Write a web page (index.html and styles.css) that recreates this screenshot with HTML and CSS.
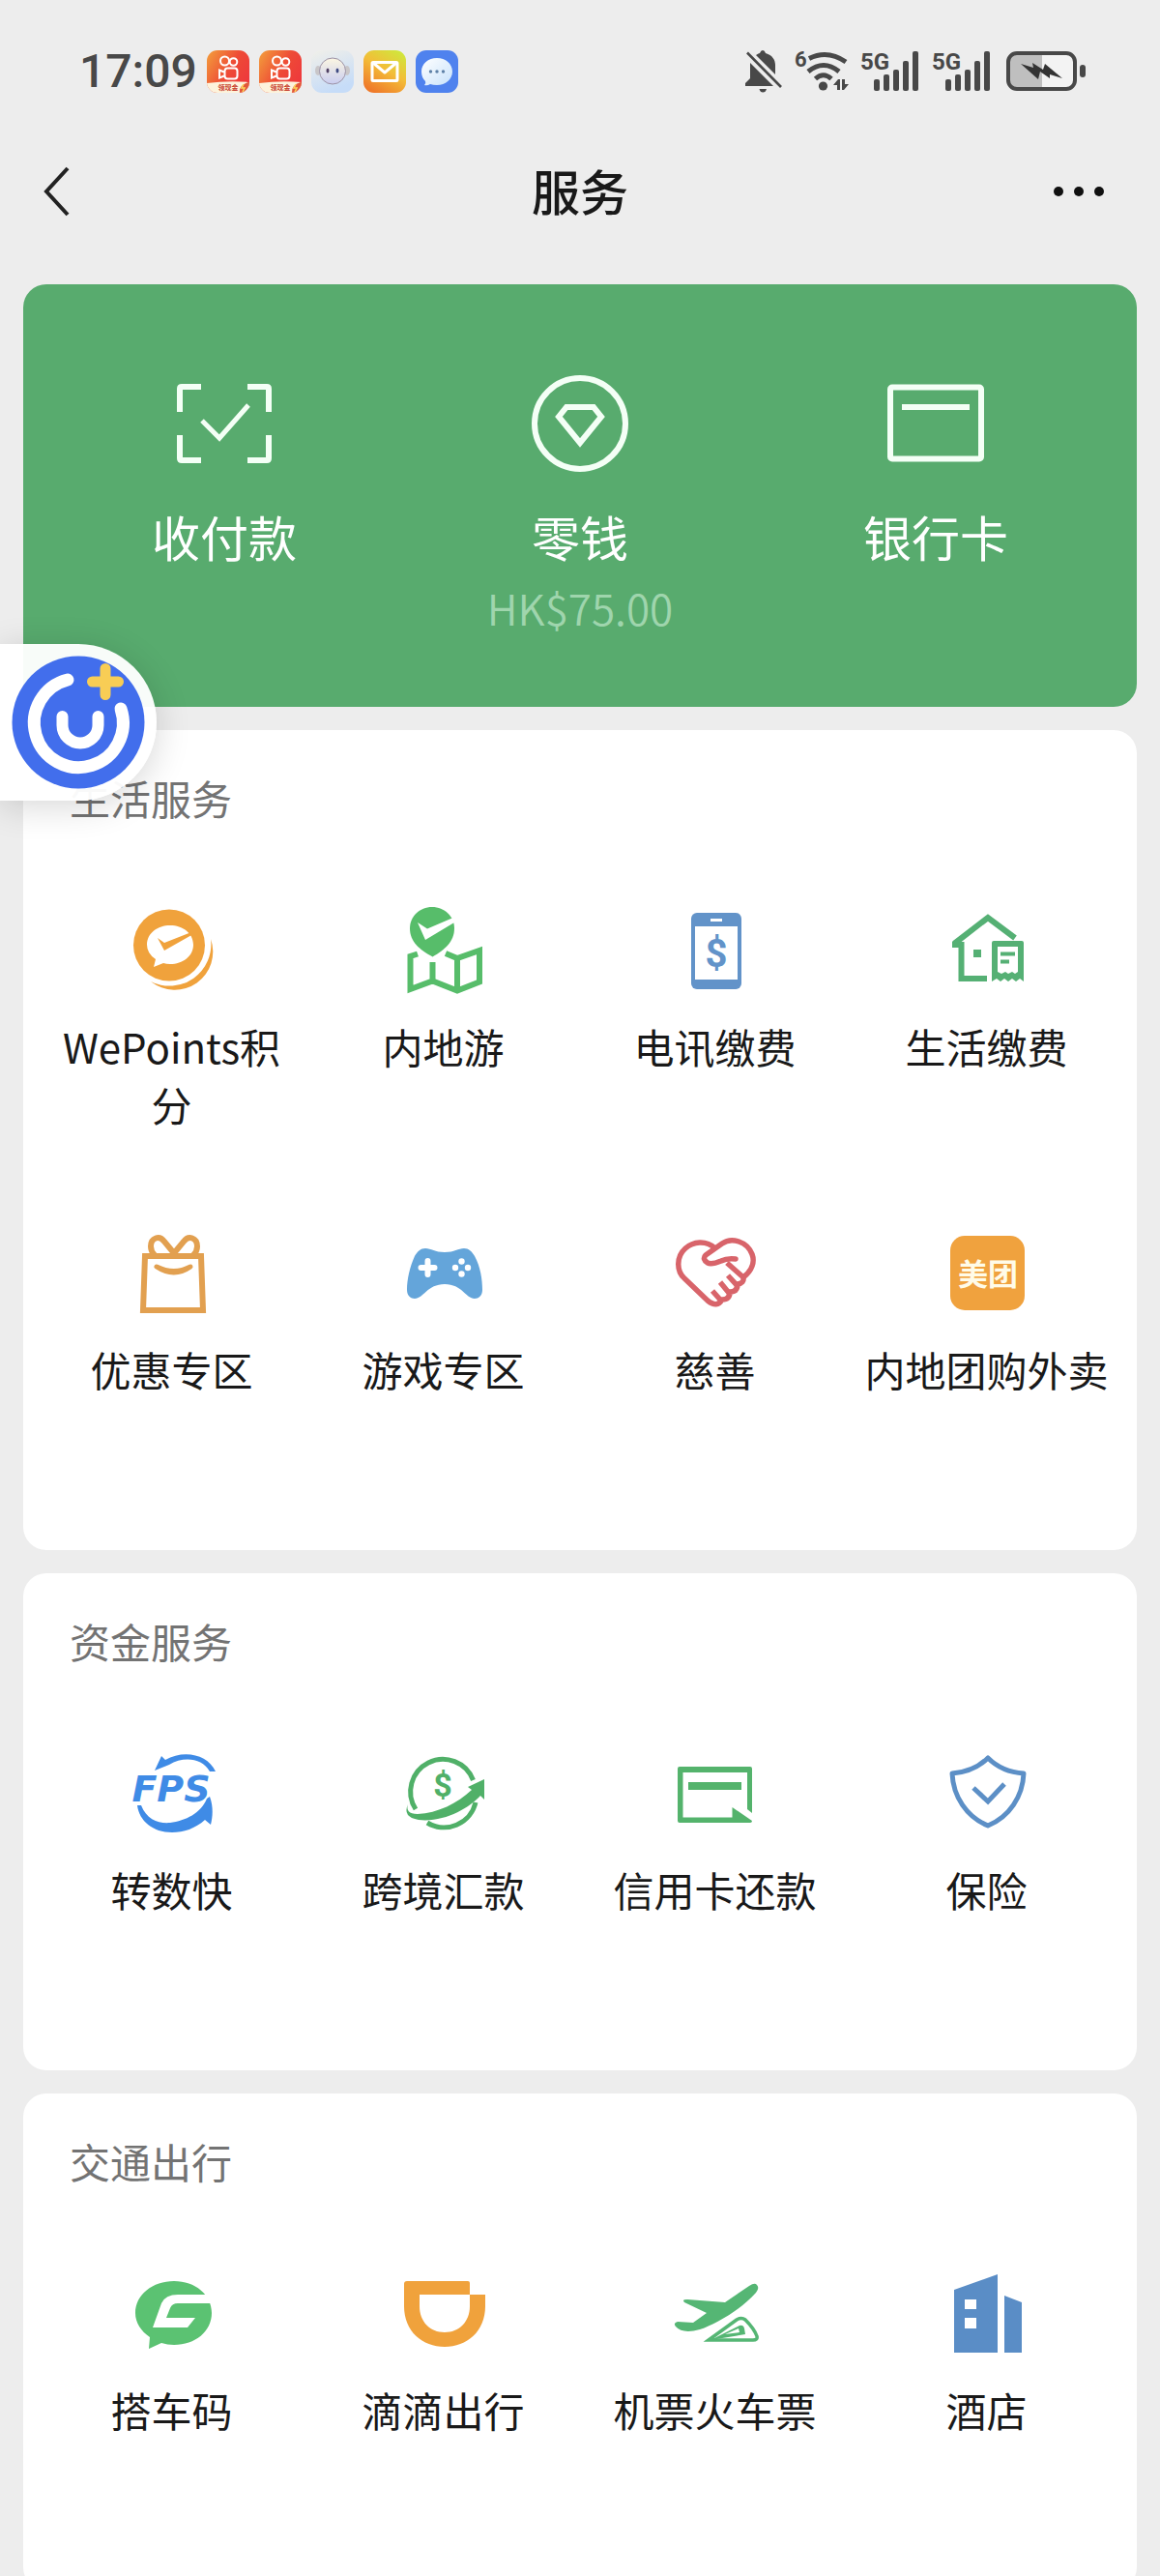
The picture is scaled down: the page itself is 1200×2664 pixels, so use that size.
FILE: index.html
```html
<!DOCTYPE html>
<html lang="zh-CN">
<head>
  <meta charset="UTF-8">
  <meta name="viewport" content="width=device-width">
  <title>服务</title>
  <link rel="stylesheet" href="styles.css">
</head>
<body>
  <div class="statusbar">
    <span class="time">17:09</span>
    <div class="apps">
      <svg viewBox="0 0 44 44" width="44" height="44">
        <defs>
          <linearGradient id="ks" x1="0" y1="0" x2="1" y2="0.6"><stop offset="0" stop-color="#f3a03c"/><stop offset="0.6" stop-color="#ee4a36"/><stop offset="1" stop-color="#ee3a3c"/></linearGradient>
          <clipPath id="app"><rect width="44" height="44" rx="11"/></clipPath>
        </defs>
        <g id="kuaishou" clip-path="url(#app)">
          <rect width="44" height="44" fill="url(#ks)"/>
          <g fill="none" stroke="#fff" stroke-width="2">
            <circle cx="18.500" cy="11" r="4.500"/><circle cx="27.500" cy="12" r="3.800"/>
            <rect x="18.500" y="18.500" width="13" height="11" rx="3"/>
            <path d="M18 22.500l-5-2v8l5-2"/>
          </g>
          <path d="M0 34q22-3 44-1v11H0z" fill="#fdf3dc"/>
          <path d="M34 44q-1-8 9-11h1v11z" fill="#e2573a"/>
          <path d="M38 35l-2 4h3l-2 4" fill="none" stroke="#fbd65a" stroke-width="1.500"/>
          <text x="22" y="41" font-size="7" class="tiny" fill="#c8402c">领现金</text>
        </g>
      </svg>
      <svg viewBox="0 0 44 44" width="44" height="44"><use href="#kuaishou"/></svg>
      <svg viewBox="0 0 44 44" width="44" height="44">
        <defs>
          <linearGradient id="bot" x1="0" y1="0" x2="0.4" y2="1"><stop offset="0" stop-color="#f1f0e9"/><stop offset="1" stop-color="#c6dcf8"/></linearGradient>
          <linearGradient id="face" x1="0" y1="0" x2="0" y2="1"><stop offset="0" stop-color="#fcf6e2"/><stop offset="1" stop-color="#c9cdf0"/></linearGradient>
        </defs>
        <rect width="44" height="44" rx="11" fill="url(#bot)"/>
        <ellipse cx="7" cy="21" rx="3" ry="5" fill="#c9c6c8"/><ellipse cx="37" cy="21" rx="3" ry="5" fill="#c9c6c8"/>
        <circle cx="22" cy="21.500" r="13.500" fill="url(#face)" stroke="#9d93a6" stroke-width="1"/>
        <ellipse cx="17" cy="21" rx="1.500" ry="2.500" fill="#4f3f63"/><ellipse cx="27" cy="21" rx="1.500" ry="2.500" fill="#3f4a83"/>
      </svg>
      <svg viewBox="0 0 44 44" width="44" height="44">
        <defs><linearGradient id="mail" x1="0.900" y1="0" x2="0.300" y2="1"><stop offset="0" stop-color="#cdea3c"/><stop offset="0.500" stop-color="#f3bd38"/><stop offset="1" stop-color="#ef7a2a"/></linearGradient></defs>
        <rect width="44" height="44" rx="11" fill="url(#mail)"/>
        <g fill="none" stroke="#fff" stroke-width="3" stroke-linejoin="round"><rect x="9" y="12.500" width="26" height="19" rx="1"/><path d="M10 13l12 10 12-10"/></g>
      </svg>
      <svg viewBox="0 0 44 44" width="44" height="44">
        <defs><linearGradient id="msg" x1="0" y1="0" x2="1" y2="1"><stop offset="0" stop-color="#fff"/><stop offset="1" stop-color="#c8e2fb"/></linearGradient></defs>
        <rect width="44" height="44" rx="11" fill="#4f82ee"/>
        <path d="M22 8c9 0 16 6 16 14s-7 14-16 14q-4 0-7-1-3 2-6 1 2-2 1-4-4-4-4-10C6 14 13 8 22 8z" fill="url(#msg)"/>
        <g fill="#5f82a8"><circle cx="15.500" cy="22" r="1.700"/><circle cx="22" cy="22" r="1.700"/><circle cx="28.500" cy="22" r="1.700"/></g>
      </svg>
    </div>
    <div class="signals">
      <svg viewBox="0 0 39 44" width="39" height="44" fill="#484848">
        <path d="M5 13L29 37H0V34L5 29z"/>
        <path d="M11 5q3-2 4-2 1-3 3-3t3 3c7 2 10 7 10 12v10z"/>
        <path d="M14.500 40H22q-1 3.500-3.800 3.500T14.500 40z"/>
        <path d="M2 2.500L37 38" stroke="#484848" stroke-width="2.600"/>
      </svg>
      <svg viewBox="0 0 56 44" width="56" height="44" fill="#484848">
        <text x="0" y="17" font-size="22" class="net">6</text>
        <g fill="none" stroke="#484848" stroke-width="5">
          <path d="M15 8.500Q34-1 53 12"/><path d="M14 22Q30 9 46 22"/><path d="M21.500 29.500Q30 22 38 29.500"/>
        </g>
        <circle cx="29.500" cy="37" r="4.600"/>
        <path d="M40 36l5-6h2v11h-3v-5zM56 35l-5 6h-2V30h3v5z"/>
      </svg>
      <svg viewBox="0 0 62 44" width="62" height="44">
        <g id="bars" fill="#484848">
          <text x="0" y="20" font-size="24" class="net">5G</text>
          <rect x="14" y="30" width="6" height="12" rx="2"/><rect x="24" y="25" width="6" height="17" rx="2"/><rect x="34" y="20" width="6" height="22" rx="2"/><rect x="44" y="11" width="6" height="31" rx="2"/><rect x="54" y="1" width="6" height="41" rx="2"/>
        </g>
      </svg>
      <svg viewBox="0 0 62 44" width="62" height="44"><use href="#bars"/></svg>
      <svg viewBox="0 0 85 44" width="85" height="44">
        <path d="M14 3h26v36H14Q6 39 6 31V11q0-8 8-8z" fill="#bfbfbf"/>
        <path d="M40 3h25q8 0 8 8v20q0 8-8 8H40z" fill="#f3f3f3"/>
        <rect x="5" y="3" width="69" height="37" rx="9" fill="none" stroke="#484848" stroke-width="4"/>
        <rect x="79" y="15" width="6" height="13" rx="3" fill="#484848"/>
        <path d="M18 14l13 4-1-5 11 7 2-6 18 15-13-4v4l-10-7-2 8z" fill="#333"/>
      </svg>
    </div>
  </div>

  <header class="navbar">
    <button class="nav-btn" type="button" aria-label="返回">
      <svg viewBox="0 0 68 52" width="68" height="52"><path d="M26 2L4 26l22 24" fill="none" stroke="#222" stroke-width="4"/></svg>
    </button>
    <h1>服务</h1>
    <button class="nav-btn" type="button" aria-label="更多">
      <svg viewBox="0 0 68 12" width="68" height="12" fill="#111"><circle cx="7" cy="6" r="5"/><circle cx="28" cy="6" r="5"/><circle cx="49" cy="6" r="5"/></svg>
    </button>
  </header>

  <main>
    <nav class="wallet">
      <a href="#">
        <svg viewBox="0 0 100 100" width="100" height="100" fill="none" stroke="#f4fff6" stroke-width="6">
          <path d="M26 12H6q-2 0-2 2v24M74 12h20q2 0 2 2v24M26 88H6q-2 0-2-2V62M74 88h20q2 0 2-2V62"/>
          <path d="M27 47l18 18 30-34" stroke-width="5"/>
        </svg>
        <span class="name">收付款</span>
      </a>
      <a href="#">
        <svg viewBox="0 0 100 100" width="100" height="100" fill="none" stroke="#f4fff6" stroke-width="6">
          <circle cx="50" cy="50" r="47"/>
          <path d="M36 33h28l8 10-22 27-22-27z"/>
        </svg>
        <span class="name">零钱</span>
        <span class="amount">HK$75.00</span>
      </a>
      <a href="#">
        <svg viewBox="0 0 100 100" width="100" height="100" fill="none" stroke="#f4fff6" stroke-width="6">
          <rect x="3" y="12.500" width="94" height="74" rx="2"/>
          <path d="M15 33h70"/>
        </svg>
        <span class="name">银行卡</span>
      </a>
    </nav>

    <section class="card">
      <h2>生活服务</h2>
      <div class="grid">
        <a href="#">
          <svg viewBox="0 0 96 96" width="96" height="96" fill="#f0a23c">
            <circle cx="45" cy="42.500" r="37"/>
            <path d="M26 80A39.500 39.500 0 0 0 88 36A43 43 0 0 1 26 80z"/>
            <path d="M46 22c13 0 24 8 24 20S59 62 46 62q-4 0-7-1l-10 4 2-8q-9-6-9-15c0-12 11-20 24-20z" fill="#fff"/>
            <path d="M33 35l7 5 28-11 2 2-30 17z"/>
          </svg>
          <span>WePoints积分</span>
        </a>
        <a href="#">
          <svg viewBox="0 0 96 96" width="96" height="96" fill="#57bd6a">
            <path d="M36 3c13 0 23 10 23 22 0 14-10 22-22.500 29.500C23 47 13 39 13 25 13 13 23 3 36 3z"/>
            <path d="M21 19l10 6.500L59 13.500v5.500L29 37z" fill="#fff"/>
            <path d="M21 51.500l-7.500 2.500V88l23-8.500L62 89.500l23-9V48L62 56l-12-5M36.500 60v20M62 56v33" fill="none" stroke="#57bd6a" stroke-width="6"/>
          </svg>
          <span>内地游</span>
        </a>
        <a href="#">
          <svg viewBox="0 0 96 96" width="96" height="96">
            <rect x="23" y="9" width="52" height="79" rx="6" fill="#6293c9"/>
            <rect x="27" y="23" width="44" height="55" fill="#fff"/>
            <path d="M43 16.500h12" stroke="#fff" stroke-width="3"/>
            <text x="49" y="65" font-size="40" class="sign" fill="#6293c9">$</text>
          </svg>
          <span>电讯缴费</span>
        </a>
        <a href="#">
          <svg viewBox="0 0 96 96" width="96" height="96" fill="none" stroke="#55b074" stroke-width="6">
            <path d="M77 35L49 14 14 41M12 42h9.500v35H48"/>
            <path d="M34 47h8v8h-8z" fill="#55b074" stroke="none"/>
            <path d="M53 40q0-2 2-2h29q2 0 2 2v40l-4-3-4 3-4-3-4 3-4-3-4 3-4-3-5 3zM59 44v26l4 2 4-2 3 2 4-2 3 2 3-2V44z" fill="#55b074" fill-rule="evenodd" stroke="none"/>
            <path d="M62 51.500h15M62 59.500h9" stroke-width="4"/>
          </svg>
          <span>生活缴费</span>
        </a>
        <a href="#">
          <svg viewBox="0 0 96 96" width="96" height="96" fill="none" stroke="#e2a050" stroke-width="6">
            <path d="M20 30h58l2 56H18z"/>
            <path d="M50 27L40 15C35 8 26 11 26 20q0 5 4 9M50 27l10-12c5-7 14-4 14 5q0 5-4 9"/>
            <path d="M32 41q18 9 35 0-17 12-35 0z" fill="#e2a050" stroke-width="5" stroke-linejoin="round"/>
          </svg>
          <span>优惠专区</span>
        </a>
        <a href="#">
          <svg viewBox="0 0 96 96" width="96" height="96">
            <path d="M29 22c6 0 10 4 20 4s14-4 20-4c5 0 8 3 11 8 6 11 8 24 8 35 0 6-4 9-8 9-9 0-13-15-31-15S27 74 18 74c-4 0-8-3-8-9 0-11 3-24 8-35 3-5 6-8 11-8z" fill="#64a5da"/>
            <path d="M31.500 35v14M24.500 42h14" stroke="#fff" stroke-width="6" stroke-linecap="round"/>
            <g fill="#fff"><circle cx="66.500" cy="35.500" r="3.200"/><circle cx="60" cy="42" r="3.200"/><circle cx="73" cy="42" r="3.200"/><circle cx="66.500" cy="48.500" r="3.200"/></g>
          </svg>
          <span>游戏专区</span>
        </a>
        <a href="#">
          <svg viewBox="0 0 96 96" width="96" height="96" fill="none" stroke="#d8646a" stroke-width="5.500" stroke-linejoin="round" stroke-linecap="round">
            <path d="M48 22C38 13 25 15 17 22 7 31 8 46 16 53L40 76q10 8 15-1 8 0 8-8 8 0 8-8 7-1 6-7c9-7 12-16 9-24C81 15 65 10 55 17L38 29q-4 4 2 8 4 2 14-2 6-3 15-2"/>
            <path d="M60 37l17 15M61 50l9 10M53 57l9 11M45 66l8 9" stroke-linecap="butt"/>
          </svg>
          <span>慈善</span>
        </a>
        <a href="#">
          <svg viewBox="0 0 96 96" width="96" height="96">
            <rect x="10" y="9" width="77" height="77" rx="15" fill="#f0a23e"/>
            <text x="49" y="60" font-size="31" class="tiny" fill="#fffbe8">美团</text>
          </svg>
          <span>内地团购外卖</span>
        </a>
      </div>
    </section>

    <section class="card">
      <h2>资金服务</h2>
      <div class="grid">
        <a href="#">
          <svg viewBox="0 0 96 96" width="96" height="96" fill="#3f8be6">
            <path d="M30 24L37 9l4 4C60 2 85 7 93 25h-6C79 11 60 9 45 18z"/>
            <path d="M12 60h4c6 15 18 19 30 18 16-2 32-10 38-25l3-2c4 11 3 21 1 29l-6-5c-10 9-22 13-34 13-20 0-34-12-36-28z"/>
            <text x="47" y="56" font-size="38" class="fps">FPS</text>
          </svg>
          <span>转数快</span>
        </a>
        <a href="#">
          <svg viewBox="0 0 96 96" width="96" height="96" fill="#50b068">
            <path d="M19 64A33.500 33.500 0 1 1 78.500 34M31 78A33.500 33.500 0 0 0 81 57" fill="none" stroke="#50b068" stroke-width="5"/>
            <path d="M11 59q-6 13 11 16c26 3 52-12 64-25l4 4V33L73 41l4 3C62 58 42 68 21 69 12 69 9 65 11 59z"/>
            <text x="47" y="51" font-size="34" class="sign">$</text>
          </svg>
          <span>跨境汇款</span>
        </a>
        <a href="#">
          <svg viewBox="0 0 96 96" width="96" height="96" fill="#54b36c">
            <path d="M11 20h73q2 0 2 2v46l-5-4V26H14.500v46.500H65.500V62L86 76q0 2-2 2H11q-2 0-2-2V22q0-2 2-2z"/>
            <rect x="20" y="36" width="55" height="8"/>
          </svg>
          <span>信用卡还款</span>
        </a>
        <a href="#">
          <svg viewBox="0 0 96 96" width="96" height="96" fill="none" stroke="#5c8fc6" stroke-width="5">
            <path d="M49 11C40 20 27 26 12 27c1 24 15 45 37 54 22-9 36-30 37-54-15-1-28-7-37-16z" stroke-linejoin="round"/>
            <path d="M34 42l15 14 17-18"/>
          </svg>
          <span>保险</span>
        </a>
      </div>
    </section>

    <section class="card">
      <h2>交通出行</h2>
      <div class="grid">
        <a href="#">
          <svg viewBox="0 0 96 96" width="96" height="96">
            <path d="M50 14c22 0 39 14 39 33S72 80 50 80q-7 0-13-2l-13 6 1-12C16 66 10 57 10 47c0-19 18-33 40-33z" fill="#5bc272"/>
            <path d="M90 28H54q-13 0-17 9l-9 25h36l8-10H42l4-10q2-5 8-5h36z" fill="#fff"/>
          </svg>
          <span>搭车码</span>
        </a>
        <a href="#">
          <svg viewBox="0 0 96 96" width="96" height="96">
            <path d="M10 14h63q2 0 2 2v12h16v12C91 66 72 82 49 82S7 66 7 40V17q0-3 3-3zM23 28v12c0 16 11 27 26 27s26-11 26-27V28z" fill="#f0a23c" fill-rule="evenodd"/>
          </svg>
          <span>滴滴出行</span>
        </a>
        <a href="#">
          <svg viewBox="0 0 96 96" width="96" height="96" fill="#55b674">
            <path d="M58 36l25-17q6-4 8-1 3 3-1 8C76 42 50 58 32 64q-18 5-25-3-3-4 2-5l16 1 14-10-23-11q-3-3 3-3z"/>
            <path d="M41 75l29-21q5-3 9 0 9 9 12 17 1 4-4 4z" fill="none" stroke="#55b674" stroke-width="3.500"/>
            <path d="M43 75l30-15q4-1 5 3l1 6z"/>
            <path d="M58 69l14-6 1 4z" fill="#fff"/>
          </svg>
          <span>机票火车票</span>
        </a>
        <a href="#">
          <svg viewBox="0 0 96 96" width="96" height="96" fill="#5a8dc6">
            <path d="M14 23L59 7v81H14zM25 33v10h12V33zM25 52v11h12V52z" fill-rule="evenodd"/>
            <path d="M66 29l18 7v52H66z"/>
          </svg>
          <span>酒店</span>
        </a>
      </div>
    </section>
  </main>

  <button class="floater" type="button" aria-label="助手">
    <svg viewBox="0 0 162 162" width="162" height="162" fill="none" stroke="#fff" stroke-linecap="round">
      <circle cx="81" cy="81" r="68.500" fill="#426eec" stroke="none"/>
      <path d="M70 37A46 46 0 1 0 125 67" stroke-width="13"/>
      <path d="M64.500 75v9a18.500 18.500 0 0 0 37 0v-9" stroke-width="12"/>
      <path d="M109 25.500v27M95.500 39h27" stroke="#f8cd55" stroke-width="11"/>
    </svg>
  </button>
</body>
</html>
```

FILE: styles.css
```css
* { box-sizing: border-box; }
body { margin: 0; height: 100vh; display: flex; flex-direction: column; background: #ededed; color: #191919; font-family: "Noto Sans CJK SC", sans-serif; }
svg { display: block; flex: none; overflow: visible; }
a { color: inherit; text-decoration: none; }
button { padding: 0; border: none; background: none; cursor: pointer; }

.statusbar { display: flex; align-items: center; flex: none; height: 148px; padding: 0 77px 0 82px; }
.time { width: 132px; font: 500 48px/56px Roboto, sans-serif; color: #484848; }
.apps { display: flex; gap: 10px; }
.signals { display: flex; gap: 12px; margin-left: auto; }
.net { font-family: "Liberation Sans Narrow", Roboto, sans-serif; font-weight: bold; }
.tiny { font-weight: bold; text-anchor: middle; }
.sign { font-family: Roboto, sans-serif; font-weight: bold; text-anchor: middle; }
.fps { font-family: "DejaVu Sans", sans-serif; font-weight: bold; font-style: italic; text-anchor: middle; }

.navbar { display: flex; align-items: center; justify-content: space-between; flex: none; height: 100px; padding: 0 44px; }
.navbar h1 { margin: 0 0 4px; font-size: 50px; line-height: 72px; font-weight: 500; }
.nav-btn { display: flex; width: 68px; }

main { flex: 1; min-height: 0; padding: 46px 24px 24px; overflow-y: auto; scrollbar-width: none; }

.wallet { display: grid; grid-template-columns: repeat(3, 1fr); padding: 94px 24px 73px; border-radius: 24px; background: #58ab6e; color: #fff; }
.wallet a { display: flex; flex-direction: column; align-items: center; }
.wallet .name { margin-top: 30px; font-size: 50px; line-height: 72px; }
.wallet .amount { margin-top: 8px; font-size: 44px; line-height: 60px; font-weight: 350; color: #9fd5ad; }

.card { margin-top: 24px; border-radius: 24px; background: #fff; }
.card h2 { margin: 0; padding: 40px 48px 80px; font-size: 42px; line-height: 60px; font-weight: normal; color: #737373; }
.grid { display: grid; grid-template-columns: repeat(4, 1fr); grid-auto-rows: minmax(334px, auto); padding: 0 15px 0 13px; }
.grid a { display: flex; flex-direction: column; align-items: center; padding: 0 12px; font-size: 42px; line-height: 60px; text-align: center; }
.grid span { margin-top: 21px; }

.floater { position: fixed; top: 666px; left: 0; border-radius: 0 81px 81px 0; background: rgba(255, 255, 255, 0.96); box-shadow: 0 6px 36px rgba(0, 0, 0, 0.16); }
```
